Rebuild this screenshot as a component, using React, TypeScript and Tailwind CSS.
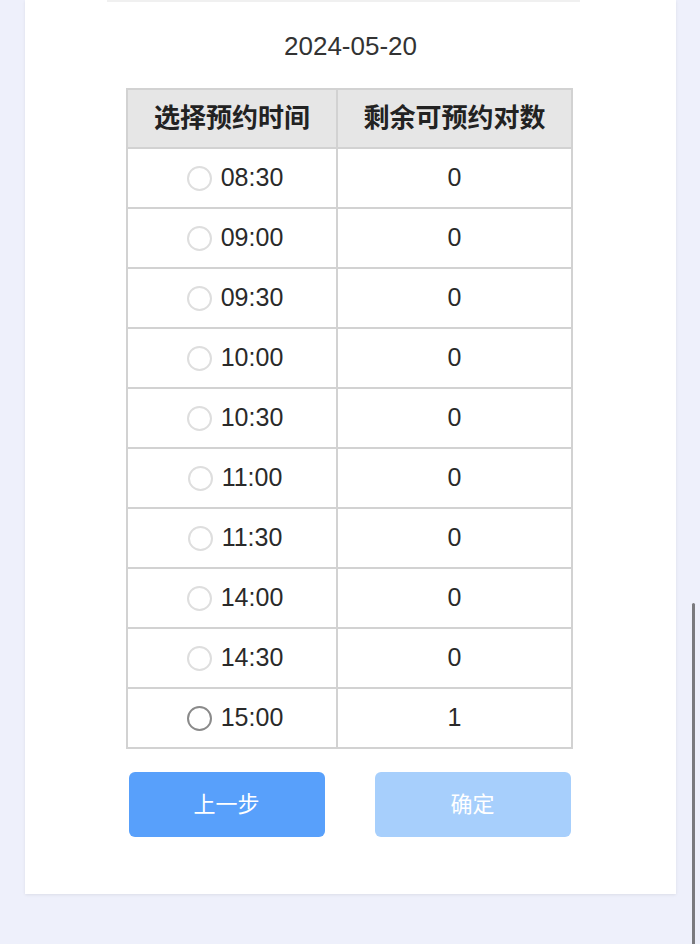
import { useState } from 'react';

const slots = [
  { time: '08:30', left: 0 },
  { time: '09:00', left: 0 },
  { time: '09:30', left: 0 },
  { time: '10:00', left: 0 },
  { time: '10:30', left: 0 },
  { time: '11:00', left: 0 },
  { time: '11:30', left: 0 },
  { time: '14:00', left: 0 },
  { time: '14:30', left: 0 },
  { time: '15:00', left: 1 },
];

export default function App() {
  const [picked, setPicked] = useState<string | null>(null);

  return (
    <div
      className="min-h-[944px] bg-[#eef0fb] relative overflow-hidden"
      style={{ fontFamily: '"Liberation Sans", Arial, "Noto Sans CJK SC", sans-serif' }}
    >
      <div className="ml-[25px] w-[651px] bg-white shadow-[0_1px_3px_rgba(0,0,0,0.08)] pb-[57px]">
        <div className="mx-auto h-[2px] w-[473px] -translate-x-[7px] bg-[#f0f0f0]" />

        <div className="pt-[29px] text-center text-[26px] leading-[30px] text-[#333]">2024-05-20</div>

        <table className="mx-auto mt-[27px] w-[447px] -translate-x-[1px] border-collapse border-2 border-[#d2d2d2] text-[#222]">
          <thead>
            <tr className="h-[59px] bg-[#e6e6e6]">
              <th className="w-[210px] border-2 border-[#d2d2d2] text-[26px] font-bold">选择预约时间</th>
              <th className="border-2 border-[#d2d2d2] text-[26px] font-bold">剩余可预约对数</th>
            </tr>
          </thead>
          <tbody>
            {slots.map((s) => (
              <tr key={s.time} className="h-[60px]">
                <td className="border-2 border-[#d2d2d2]">
                  <label className="flex translate-x-[3px] items-center justify-center gap-[9px] cursor-pointer">
                    <span
                      onClick={() => s.left > 0 && setPicked(s.time)}
                      className={
                        s.left > 0
                          ? 'h-[25px] w-[25px] rounded-full border-2 border-[#8a8a8a] flex items-center justify-center'
                          : 'h-[25px] w-[25px] rounded-full border-2 border-[#dedede]'
                      }
                    >
                      {picked === s.time && <span className="h-[11px] w-[11px] rounded-full bg-[#58a0fb]" />}
                    </span>
                    <span className="text-[25px] text-[#2a2a2a]">{s.time}</span>
                  </label>
                </td>
                <td className="border-2 border-[#d2d2d2] text-center text-[25px] text-[#2a2a2a]">{s.left}</td>
              </tr>
            ))}
          </tbody>
        </table>

        <div className="mx-auto mt-[23px] flex w-[442px] -translate-x-[1px] justify-between">
          <button className="h-[65px] w-[196px] rounded-[6px] bg-[#58a0fb] text-[22px] text-white">上一步</button>
          <button
            disabled={!picked}
            className={
              picked
                ? 'h-[65px] w-[196px] rounded-[6px] bg-[#58a0fb] text-[22px] text-white'
                : 'h-[65px] w-[196px] rounded-[6px] bg-[#a7cffc] text-[22px] text-white'
            }
          >
            确定
          </button>
        </div>
      </div>

      <div className="absolute right-[5px] top-[603px] h-[345px] w-[3px] rounded-full bg-[#7a7a7e]" />
    </div>
  );
}
